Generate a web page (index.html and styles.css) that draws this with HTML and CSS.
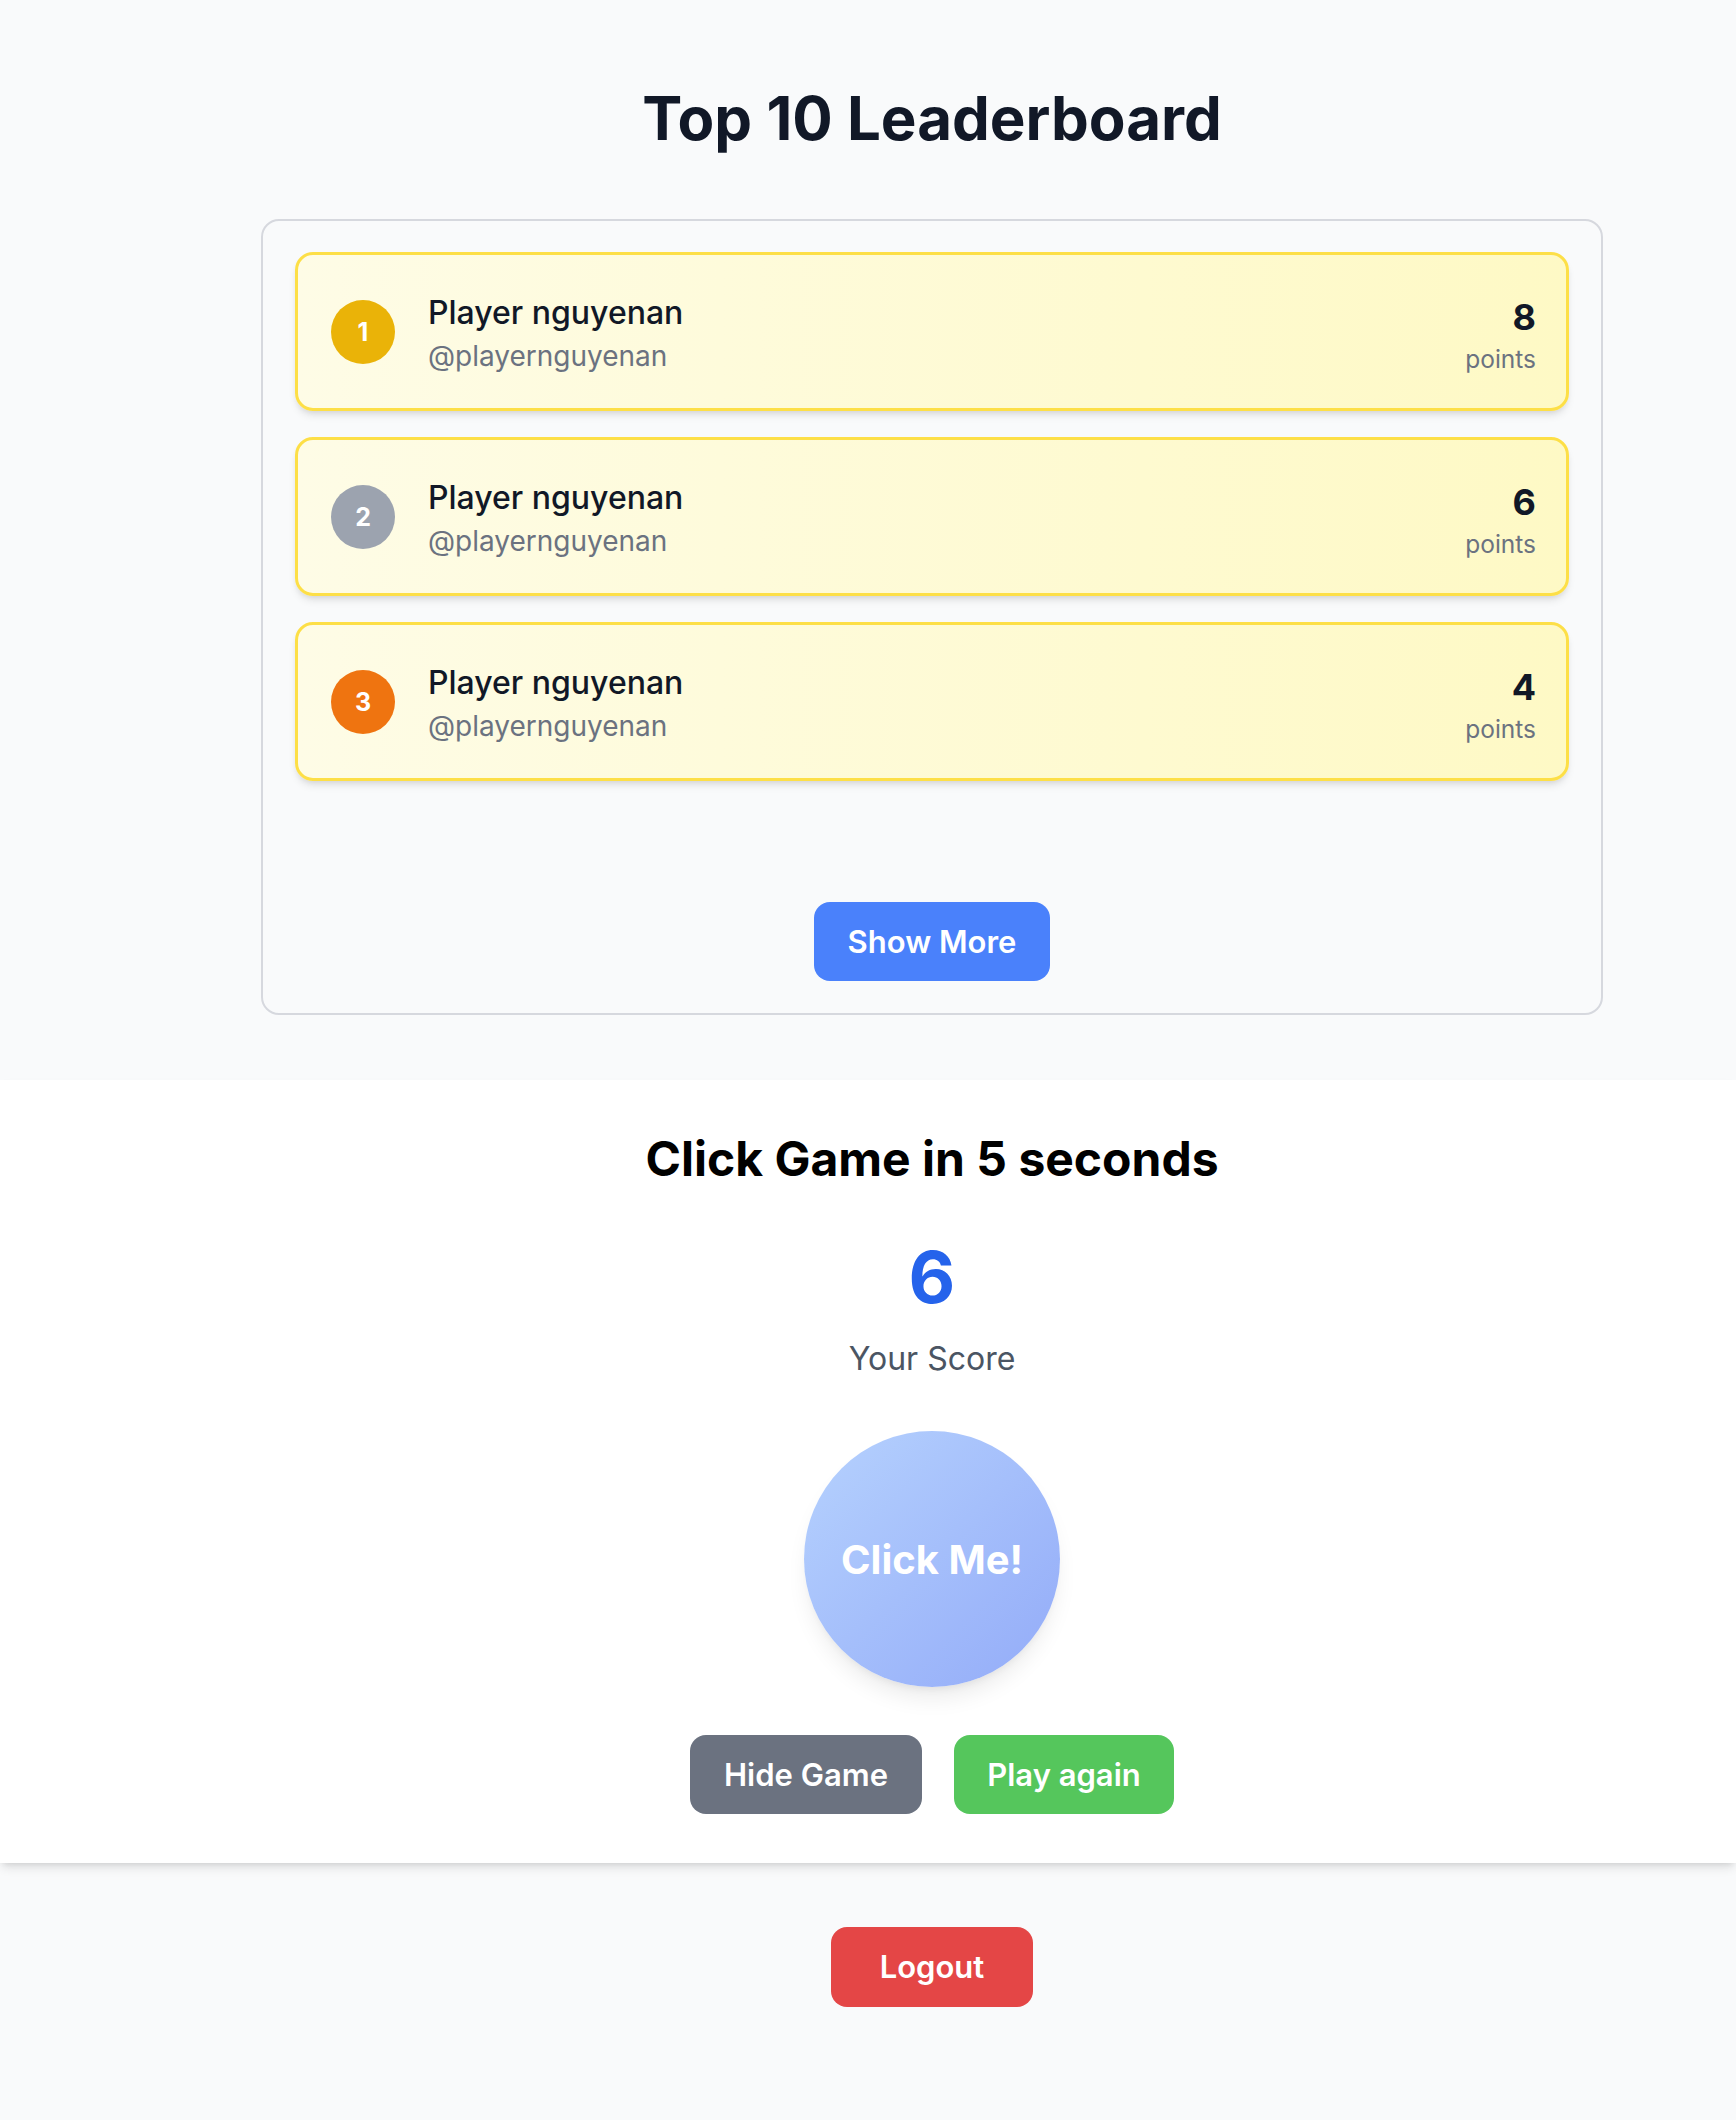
FILE: index.html
```html
<!DOCTYPE html>
<html lang="en">
<head>
<meta charset="utf-8">
<title>Leaderboard</title>
<link rel="stylesheet" href="styles.css">
</head>
<body>
  <section class="board-section">
    <div class="shift">
      <h1 class="board-title">Top 10 Leaderboard</h1>
      <div class="board-card">
        <ul class="rank-list">
          <li class="rank-item">
            <div class="rank-left">
              <span class="rank-badge badge-gold">1</span>
              <div class="player">
                <div class="player-name">Player nguyenan</div>
                <div class="player-handle">@playernguyenan</div>
              </div>
            </div>
            <div class="score">
              <div class="score-value">8</div>
              <div class="score-label">points</div>
            </div>
          </li>
          <li class="rank-item">
            <div class="rank-left">
              <span class="rank-badge badge-silver">2</span>
              <div class="player">
                <div class="player-name">Player nguyenan</div>
                <div class="player-handle">@playernguyenan</div>
              </div>
            </div>
            <div class="score">
              <div class="score-value">6</div>
              <div class="score-label">points</div>
            </div>
          </li>
          <li class="rank-item">
            <div class="rank-left">
              <span class="rank-badge badge-bronze">3</span>
              <div class="player">
                <div class="player-name">Player nguyenan</div>
                <div class="player-handle">@playernguyenan</div>
              </div>
            </div>
            <div class="score">
              <div class="score-value">4</div>
              <div class="score-label">points</div>
            </div>
          </li>
        </ul>
        <div class="more-row">
          <button class="btn btn-blue">Show More</button>
        </div>
      </div>
    </div>
  </section>

  <section class="game-section">
    <div class="shift game-inner">
      <h2 class="game-title">Click Game in 5 seconds</h2>
      <div class="game-score">6</div>
      <div class="game-score-label">Your Score</div>
      <button class="click-circle">Click Me!</button>
      <div class="game-actions">
        <button class="btn btn-gray">Hide Game</button>
        <button class="btn btn-green">Play again</button>
      </div>
    </div>
  </section>

  <section class="footer-section">
    <div class="shift footer-inner">
      <button class="btn btn-red">Logout</button>
    </div>
  </section>
</body>
</html>
```

FILE: styles.css
```css
* { box-sizing: border-box; }

html, body {
  margin: 0;
  padding: 0;
  background: #f9fafb;
  font-family: "Inter", "Noto Sans", "Liberation Sans", sans-serif;
  color: #111827;
}

.shift {
  padding-left: 128px;
}

button {
  font-family: inherit;
  border: none;
  cursor: pointer;
}

/* Leaderboard */
.board-section {
  padding-top: 82px;
  padding-bottom: 65px;
}

.board-title {
  margin: 0;
  text-align: center;
  font-size: 60px;
  line-height: 72px;
  font-weight: 700;
  color: #111827;
}

.board-card {
  width: 1342px;
  margin: 65px auto 0;
  border: 2px solid #d6d8de;
  border-radius: 18px;
  padding: 31px 32px 32px;
}

.rank-list {
  list-style: none;
  margin: 0;
  padding: 0;
  display: flex;
  flex-direction: column;
  gap: 26px;
}

.rank-item {
  display: flex;
  align-items: center;
  justify-content: space-between;
  height: 159px;
  padding: 0 30px 0 33px;
  border: 3px solid #fddf47;
  border-radius: 18px;
  background: linear-gradient(to right, #fefce6, #fef9c5);
  box-shadow: 0 6px 9px -2px rgba(0, 0, 0, 0.1), 0 3px 6px -3px rgba(0, 0, 0, 0.1);
}

.rank-left {
  display: flex;
  align-items: center;
  gap: 33px;
}

.rank-badge {
  width: 64px;
  height: 64px;
  border-radius: 50%;
  display: flex;
  align-items: center;
  justify-content: center;
  color: #fff;
  font-weight: 700;
  font-size: 25px;
}

.badge-gold { background: #eab308; }
.badge-silver { background: #9ca3af; }
.badge-bronze { background: #ef7410; }

.player {
  padding-top: 6px;
}

.player-name {
  font-size: 32px;
  line-height: 44px;
  font-weight: 500;
  color: #111827;
}

.player-handle {
  font-size: 28px;
  line-height: 43px;
  color: #6b7280;
}

.score {
  text-align: right;
  padding-top: 10px;
}

.score-value {
  font-size: 36px;
  line-height: 44px;
  font-weight: 700;
  color: #111827;
}

.score-label {
  font-size: 24.5px;
  line-height: 40px;
  color: #6b7280;
}

.more-row {
  display: flex;
  justify-content: center;
  margin-top: 121px;
}

.btn {
  height: 79px;
  padding: 0;
  border-radius: 16px;
  color: #fff;
  font-size: 31px;
  font-weight: 600;
  line-height: 79px;
}

.btn-blue { background: #4a81fb; width: 236px; }
.btn-gray { background: #6b7280; width: 232px; }
.btn-green { background: #55c65c; width: 220px; }
.btn-red { background: #e44646; width: 202px; height: 80px; line-height: 80px; }

/* Game */
.game-section {
  background: #ffffff;
  padding-top: 51px;
  padding-bottom: 49px;
  box-shadow: 0 6px 10px -2px rgba(0, 0, 0, 0.12), 0 3px 6px -3px rgba(0, 0, 0, 0.1);
  position: relative;
}

.game-inner {
  display: flex;
  flex-direction: column;
  align-items: center;
}

.game-title {
  margin: 0;
  font-size: 48px;
  line-height: 56px;
  font-weight: 700;
  color: #000;
}

.game-score {
  margin-top: 50px;
  font-size: 72px;
  line-height: 80px;
  font-weight: 700;
  color: #2563eb;
}

.game-score-label {
  margin-top: 22px;
  font-size: 32px;
  line-height: 40px;
  color: #4b5563;
}

.click-circle {
  margin-top: 52px;
  width: 256px;
  height: 256px;
  border-radius: 50%;
  background: linear-gradient(to bottom right, #b6d2fe, #93abf8);
  color: #fff;
  font-size: 40px;
  font-weight: 700;
  box-shadow: 0 15px 22px -4px rgba(0, 0, 0, 0.08), 0 6px 9px -5px rgba(0, 0, 0, 0.08);
}

.game-actions {
  margin-top: 48px;
  display: flex;
  gap: 32px;
}

/* Footer */
.footer-section {
  padding-top: 64px;
  padding-bottom: 114px;
}

.footer-inner {
  display: flex;
  justify-content: center;
}
```
